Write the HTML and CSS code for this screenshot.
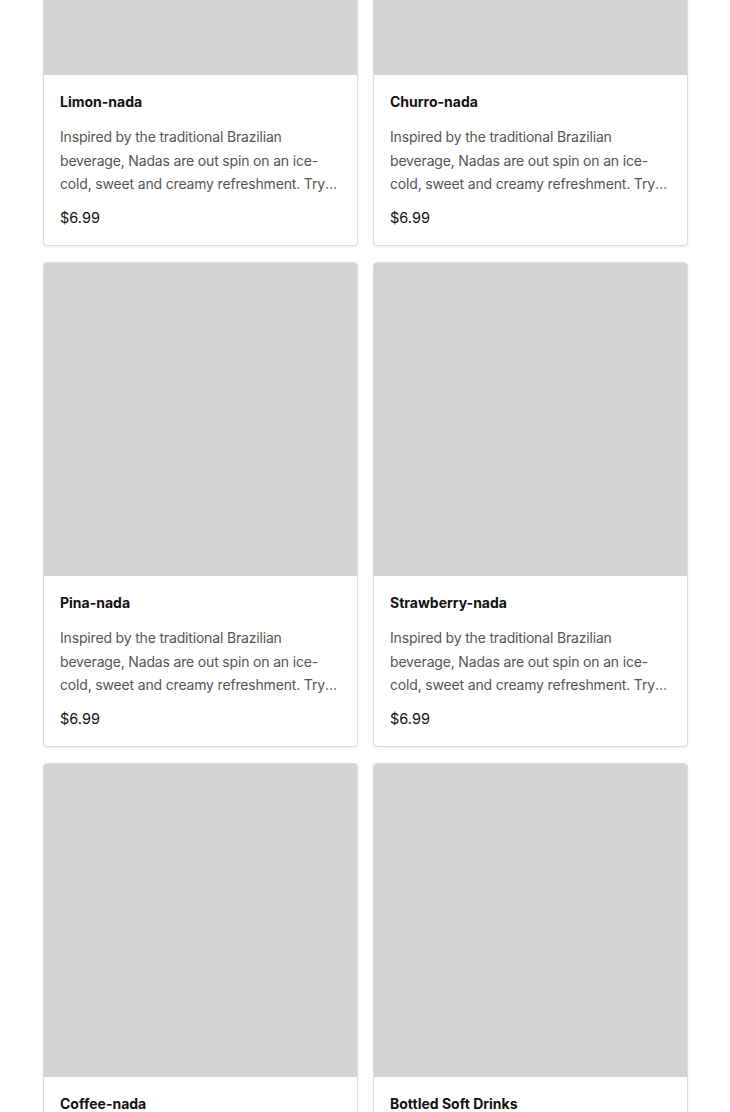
FILE: index.html
```html
<!DOCTYPE html>
<html lang="en">
<head>
<meta charset="utf-8">
<title>Menu</title>
<link rel="stylesheet" href="styles.css">
</head>
<body>
<main class="menu">
  <div class="grid">
    <article class="card">
      <div class="card-img"></div>
      <div class="card-body">
        <h3 class="card-title">Limon-nada</h3>
        <p class="card-desc">Inspired by the traditional Brazilian beverage, Nadas are out spin on an ice-cold, sweet and creamy refreshment. Try one with your meal today.</p>
        <p class="card-price">$6.99</p>
      </div>
    </article>
    <article class="card">
      <div class="card-img"></div>
      <div class="card-body">
        <h3 class="card-title">Churro-nada</h3>
        <p class="card-desc">Inspired by the traditional Brazilian beverage, Nadas are out spin on an ice-cold, sweet and creamy refreshment. Try one with your meal today.</p>
        <p class="card-price">$6.99</p>
      </div>
    </article>
    <article class="card">
      <div class="card-img"></div>
      <div class="card-body">
        <h3 class="card-title">Pina-nada</h3>
        <p class="card-desc">Inspired by the traditional Brazilian beverage, Nadas are out spin on an ice-cold, sweet and creamy refreshment. Try one with your meal today.</p>
        <p class="card-price">$6.99</p>
      </div>
    </article>
    <article class="card">
      <div class="card-img"></div>
      <div class="card-body">
        <h3 class="card-title">Strawberry-nada</h3>
        <p class="card-desc">Inspired by the traditional Brazilian beverage, Nadas are out spin on an ice-cold, sweet and creamy refreshment. Try one with your meal today.</p>
        <p class="card-price">$6.99</p>
      </div>
    </article>
    <article class="card">
      <div class="card-img"></div>
      <div class="card-body">
        <h3 class="card-title">Coffee-nada</h3>
        <p class="card-desc">Inspired by the traditional Brazilian beverage, Nadas are out spin on an ice-cold, sweet and creamy refreshment. Try one with your meal today.</p>
        <p class="card-price">$6.99</p>
      </div>
    </article>
    <article class="card">
      <div class="card-img"></div>
      <div class="card-body">
        <h3 class="card-title">Bottled Soft Drinks</h3>
        <p class="card-desc">Choose from a selection of classic bottled soft drinks, served ice-cold.</p>
        <p class="card-price">$2.99</p>
      </div>
    </article>
  </div>
</main>
</body>
</html>
```
FILE: styles.css
```css
* { box-sizing: border-box; }
html, body { margin: 0; padding: 0; background: #ffffff; }
body {
  font-family: Inter, "Liberation Sans", sans-serif;
  color: #111111;
  overflow: hidden;
}
.menu {
  padding: 0 42px 0 43px;
}
.grid {
  margin-top: -239px;
  display: grid;
  grid-template-columns: 1fr 1fr;
  column-gap: 15px;
  row-gap: 16px;
}
.card {
  border: 1px solid #dcdcdc;
  border-radius: 4px;
  overflow: hidden;
  background: #fff;
  box-shadow: 0 1px 3px rgba(0,0,0,0.08);
}
.card-img {
  aspect-ratio: 1 / 1;
  background: #d3d3d3;
}
.card-body {
  padding: 17px 16px 17.5px;
}
.card-title {
  margin: 0 0 13px;
  font-size: 14px;
  line-height: 20px;
  font-weight: 700;
  color: #111;
}
.card-desc {
  margin: 0 0 12px;
  font-size: 14px;
  line-height: 23.5px;
  letter-spacing: -0.17px;
  color: #555555;
  display: -webkit-box;
  -webkit-line-clamp: 3;
  -webkit-box-orient: vertical;
  overflow: hidden;
}
.card-price {
  margin: 0;
  font-size: 14.5px;
  line-height: 20px;
  color: #111;
}
```
